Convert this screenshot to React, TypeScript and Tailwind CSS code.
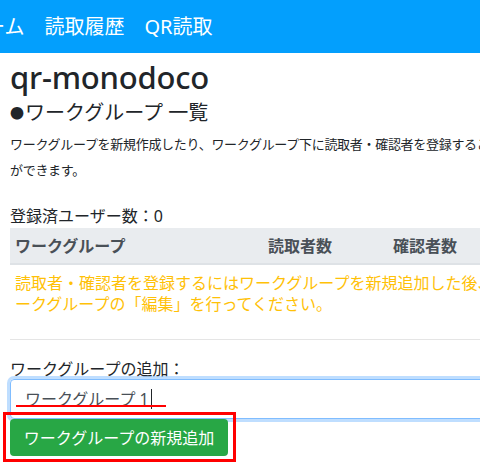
import React from 'react';

const font = { fontFamily: '"Noto Sans", "Noto Sans CJK JP", sans-serif' };

const NavBar: React.FC = () => (
  <nav className="h-[53px] bg-[#039ffd] flex items-center text-white text-[20px] gap-[20px] ml-[-35px] pt-[1px]">
    <span>ホーム</span>
    <span>読取履歴</span>
    <span>QR読取</span>
  </nav>
);

const App: React.FC = () => {
  return (
    <div className="w-[480px] h-[468px] overflow-hidden bg-white text-[#212529]" style={font}>
      <NavBar />
      <div className="w-[580px] px-[10px]">
        <h1 className="text-[31px] font-medium leading-[40px] mt-[4px] tracking-[-0.2px]">qr-monodoco</h1>
        <h3 className="text-[20px] leading-[28px] mt-[2px] flex items-center">
          <span className="text-[14px] leading-[28px] mr-[1px]">●</span>
          <span>ワークグループ 一覧</span>
        </h3>
        <p className="text-[13px] leading-[26px] mt-[4px] w-[496px] tracking-[-0.3px]">
          ワークグループを新規作成したり、ワークグループ下に読取者・確認者を登録することができます。
        </p>
        <div className="text-[16px] leading-[20px] mt-[23px]">登録済ユーザー数：0</div>

        <table className="w-full mt-[2px] border-collapse">
          <thead>
            <tr className="bg-[#e9ecef] border-b-2 border-[#dee2e6] text-[#495057] text-[16px]">
              <th className="text-left font-bold h-[36px] pl-[5px] w-[252px]">ワークグループ</th>
              <th className="text-left font-bold pl-[6px] w-[125px]">読取者数</th>
              <th className="text-left font-bold pl-[6px]">確認者数</th>
            </tr>
          </thead>
        </table>
        <div className="text-[#ffc107] text-[16px] leading-[21px] pl-[5px] pt-[8px] w-[500px]">
          読取者・確認者を登録するにはワークグループを新規追加した後、ワークグループの「編集」を行ってください。
        </div>

        <hr className="border-[#e5e5e5] mt-[24px]" />

        <div className="text-[16px] leading-[20px] mt-[19px]">ワークグループの追加：</div>
        <div className="relative">
          <div className="h-[40px] border border-[#80bdff] rounded-[4px] shadow-[0_0_0_3px_rgba(0,123,255,0.25)] flex items-center pl-[14px] text-[16px] text-[#495057]">
            <span>ワークグループ 1</span>
            <span className="w-[1px] h-[20px] bg-[#212529] ml-[2px]" />
          </div>
          <div className="absolute left-[6px] top-[26px] w-[150px] h-[2px] bg-[#ff0000]" />
        </div>
        <div className="relative">
          <div className="absolute left-[-7px] top-[-7px] w-[233px] h-[50px] border-[3px] border-[#ff0000]" />
          <button className="relative h-[37px] px-[12px] bg-[#28a745] text-white text-[16px] rounded-[4px] w-[218px]">
            ワークグループの新規追加
          </button>
        </div>
      </div>
    </div>
  );
};

export default App;
